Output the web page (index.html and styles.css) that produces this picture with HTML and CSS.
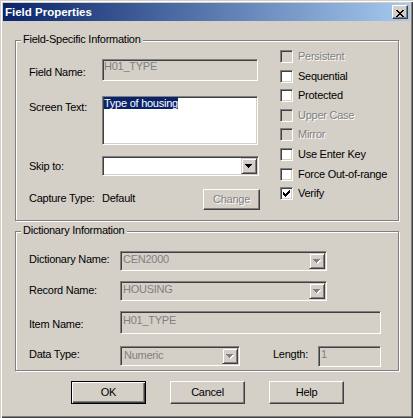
FILE: index.html
```html
<!DOCTYPE html>
<html lang="en">
<head>
<meta charset="utf-8">
<title>Field Properties</title>
<link rel="stylesheet" href="styles.css">
</head>
<body>
<div class="window">
  <div class="titlebar">
    <span class="title">Field Properties</span>
    <button class="close" type="button" aria-label="Close"><svg width="8" height="7" viewBox="0 0 8 7" shape-rendering="crispEdges"><path d="M0 0h2v1H0z M6 0h2v1H6z M1 1h2v1H1z M5 1h2v1H5z M2 2h4v1H2z M3 3h2v1H3z M2 4h4v1H2z M1 5h2v1H1z M5 5h2v1H5z M0 6h2v1H0z M6 6h2v1H6z"/></svg></button>
  </div>
  <div class="body">
    <section class="group g1">
      <span class="legend">Field-Specific Information</span>
      <div class="g1-left">
        <div class="row">
          <span class="lab w73 m7">Field Name:</span>
          <div class="edit dis fn">H01_TYPE</div>
        </div>
        <div class="row r-screen">
          <span class="lab w73 m5">Screen Text:</span>
          <div class="edit memo"><span class="sel">Type of housing</span></div>
        </div>
        <div class="row r-skip">
          <span class="lab w73 m4">Skip to:</span>
          <div class="combo skip">
            <span class="val"></span>
            <span class="drop"><svg width="8" height="4" viewBox="0 0 8 4" shape-rendering="crispEdges"><path d="M0 0h7v1H0z M1 1h5v1H1z M2 2h3v1H2z M3 3h1v1H3z"/></svg></span>
          </div>
        </div>
        <div class="row r-capture">
          <span class="lab w73 m3">Capture Type:</span>
          <div class="capture">
            <span class="m3">Default</span>
            <button class="btn small disabled" type="button">Change</button>
          </div>
        </div>
      </div>
      <div class="checks">
        <div class="check off"><span class="box"></span><span>Persistent</span></div>
        <div class="check"><span class="box"></span><span>Sequential</span></div>
        <div class="check"><span class="box"></span><span>Protected</span></div>
        <div class="check off"><span class="box"></span><span>Upper Case</span></div>
        <div class="check off"><span class="box"></span><span>Mirror</span></div>
        <div class="check"><span class="box"></span><span>Use Enter Key</span></div>
        <div class="check"><span class="box"></span><span>Force Out-of-range</span></div>
        <div class="check"><span class="box"><svg width="7" height="7" viewBox="0 0 7 7" shape-rendering="crispEdges"><path d="M0 2h1v3H0z M1 3h1v3H1z M2 4h1v3H2z M3 3h1v3H3z M4 2h1v3H4z M5 1h1v3H5z M6 0h1v3H6z"/></svg></span><span>Verify</span></div>
      </div>
    </section>

    <section class="group g2">
      <span class="legend">Dictionary Information</span>
      <div class="g2-inner">
        <div class="row">
          <span class="lab w91 m2">Dictionary Name:</span>
          <div class="combo dis dict">
            <span class="val">CEN2000</span>
            <span class="drop"><svg width="8" height="5" viewBox="0 0 8 5" shape-rendering="crispEdges"><path class="emb" d="M1 1h7v1H1z M2 2h5v1H2z M3 3h3v1H3z M4 4h1v1H4z"/><path class="gry" d="M0 0h7v1H0z M1 1h5v1H1z M2 2h3v1H2z M3 3h1v1H3z"/></svg></span>
          </div>
        </div>
        <div class="row r-rec">
          <span class="lab w91 m3">Record Name:</span>
          <div class="combo dis dict">
            <span class="val">HOUSING</span>
            <span class="drop"><svg width="8" height="5" viewBox="0 0 8 5" shape-rendering="crispEdges"><path class="emb" d="M1 1h7v1H1z M2 2h5v1H2z M3 3h3v1H3z M4 4h1v1H4z"/><path class="gry" d="M0 0h7v1H0z M1 1h5v1H1z M2 2h3v1H2z M3 3h1v1H3z"/></svg></span>
          </div>
        </div>
        <div class="row r-item">
          <span class="lab w91 m7">Item Name:</span>
          <div class="edit dis item">H01_TYPE</div>
        </div>
        <div class="row r-data">
          <span class="lab w91 m2">Data Type:</span>
          <div class="combo dis dtype">
            <span class="val v2">Numeric</span>
            <span class="drop"><svg width="8" height="5" viewBox="0 0 8 5" shape-rendering="crispEdges"><path class="emb" d="M1 1h7v1H1z M2 2h5v1H2z M3 3h3v1H3z M4 4h1v1H4z"/><path class="gry" d="M0 0h7v1H0z M1 1h5v1H1z M2 2h3v1H2z M3 3h1v1H3z"/></svg></span>
          </div>
          <span class="lab len m2">Length:</span>
          <div class="edit dis lenbox">1</div>
        </div>
      </div>
    </section>

    <div class="buttons">
      <button class="btn default" type="button">OK</button>
      <button class="btn" type="button">Cancel</button>
      <button class="btn" type="button">Help</button>
    </div>
  </div>
</div>
</body>
</html>
```

FILE: styles.css
```css
html, body {
  margin: 0;
  padding: 0;
  background: #d4d0c8;
}

body {
  font-family: "Liberation Sans", Arial, sans-serif;
  font-size: 11px;
  line-height: 13px;
  letter-spacing: -0.25px;
  color: #000;
}

.window {
  width: 413px;
  height: 418px;
  box-sizing: border-box;
  padding: 3px;
  background: #d4d0c8;
  box-shadow: inset 1px 1px #d4d0c8, inset 2px 2px #fff,
              inset -1px -1px #404040, inset -2px -2px #808080;
}

/* title bar */
.titlebar {
  height: 18px;
  display: flex;
  align-items: center;
  justify-content: space-between;
  padding: 0 2px;
  background: linear-gradient(to right, #0a246a, #a6caf0);
}

.title {
  color: #fff;
  font-weight: bold;
  font-size: 11.5px;
  letter-spacing: 0;
}

.close {
  display: block;
  width: 16px;
  height: 14px;
  box-sizing: border-box;
  padding: 0;
  margin: 0;
  background: #d4d0c8;
  border: 1px solid;
  border-color: #fff #404040 #404040 #fff;
  box-shadow: inset -1px -1px #808080;
}

.close svg {
  display: block;
  margin: 2px 0 0 3px;
}

/* body */
.body {
  padding: 19px 0 0 12px;
}

.group {
  position: relative;
  width: 384px;
  box-sizing: border-box;
  border: 1px solid #808080;
  box-shadow: inset 1px 1px #fff, 1px 1px #fff;
}

.legend {
  position: absolute;
  top: -8px;
  left: 5px;
  padding: 0 2px;
  background: #d4d0c8;
}

.g1 {
  height: 181px;
  display: flex;
}

.g2 {
  height: 140px;
  margin-top: 10px;
}

.g1-left {
  padding: 18px 0 0 13px;
}

.g2-inner {
  padding: 19px 0 0 13px;
}

.row {
  display: flex;
  align-items: flex-start;
}

.lab {
  flex: none;
  white-space: nowrap;
}

.w73 { width: 73px; }
.w91 { width: 91px; }

.m2 { margin-top: 2px; }
.m3 { margin-top: 3px; }
.m4 { margin-top: 4px; }
.m5 { margin-top: 5px; }
.m7 { margin-top: 7px; }

.r-screen { margin-top: 15px; }
.r-skip { margin-top: 11px; }
.r-capture { margin-top: 13px; }
.r-rec { margin-top: 10px; }
.r-item { margin-top: 10px; }
.r-data { margin-top: 12px; }

/* sunken edits */
.edit, .combo {
  box-sizing: border-box;
  background: #fff;
  border: 1px solid;
  border-color: #808080 #fff #fff #808080;
  box-shadow: inset 1px 1px #404040, inset -1px -1px #d4d0c8;
  white-space: nowrap;
}

.edit.dis, .combo.dis {
  background: #d4d0c8;
  color: #808080;
}

.fn {
  width: 156px;
  height: 22px;
  padding: 0 0 0 1px;
}

.memo {
  width: 156px;
  height: 49px;
  padding: 0 0 0 1px;
}

.sel {
  background: #0a246a;
  color: #fff;
}

.item {
  width: 261px;
  height: 23px;
  padding: 2px 0 0 2px;
}

.lenbox {
  width: 63px;
  height: 21px;
  padding: 1px 0 0 2px;
}

.len {
  margin-left: 33px;
  width: 45px;
}

/* combos */
.combo {
  display: flex;
  padding: 1px;
  height: 20px;
}

.combo .val {
  flex: 1;
  padding-left: 1px;
}

.combo .v2 {
  padding-top: 1px;
  padding-left: 2px;
}

.skip { width: 157px; }
.dict { width: 207px; }
.dtype { width: 120px; }

.drop {
  flex: none;
  width: 16px;
  height: 16px;
  box-sizing: border-box;
  display: flex;
  align-items: center;
  justify-content: center;
  background: #d4d0c8;
  border: 1px solid;
  border-color: #d4d0c8 #404040 #404040 #d4d0c8;
  box-shadow: inset 1px 1px #fff, inset -1px -1px #808080;
}

.drop svg {
  display: block;
}

.emb { fill: #fff; }
.gry { fill: #808080; }

/* capture row */
.capture {
  width: 158px;
  display: flex;
  justify-content: space-between;
  align-items: flex-start;
}

/* buttons */
.btn {
  display: block;
  width: 75px;
  height: 23px;
  box-sizing: border-box;
  margin: 0;
  padding: 0;
  font: inherit;
  letter-spacing: inherit;
  color: #000;
  background: #d4d0c8;
  border: 1px solid;
  border-color: #fff #404040 #404040 #fff;
  box-shadow: inset -1px -1px #808080;
  text-align: center;
}

.btn.default {
  border-color: #000;
  box-shadow: inset 1px 1px #fff, inset -1px -1px #404040, inset -2px -2px #808080;
}

.btn.small {
  width: 57px;
  height: 21px;
}

.btn.disabled {
  color: #808080;
  text-shadow: 1px 1px #fff;
}

.buttons {
  display: flex;
  gap: 24px;
  margin-top: 10px;
  padding-left: 56px;
}

/* checkboxes */
.checks {
  margin-left: 20px;
  padding-top: 9px;
}

.check {
  display: flex;
  align-items: flex-start;
  height: 19.6px;
  white-space: nowrap;
}

.box {
  flex: none;
  width: 13px;
  height: 13px;
  box-sizing: border-box;
  margin-right: 5px;
  background: #fff;
  border: 1px solid;
  border-color: #808080 #fff #fff #808080;
  box-shadow: inset 1px 1px #404040, inset -1px -1px #d4d0c8;
}

.box svg {
  display: block;
  margin: 2px 0 0 2px;
}

.check.off {
  color: #808080;
  text-shadow: 1px 1px #fff;
}

.check.off .box {
  background: #d4d0c8;
}
```
